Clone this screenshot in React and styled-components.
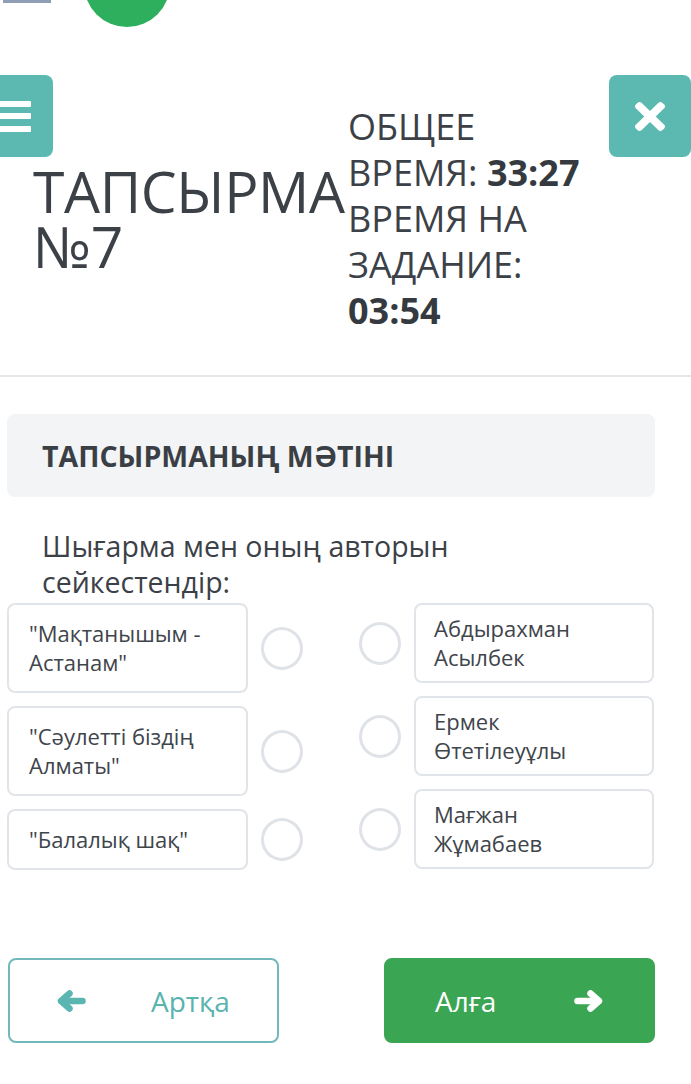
import React from 'react';
import styled, { createGlobalStyle } from 'styled-components';

const GlobalStyle = createGlobalStyle`
  html, body { margin: 0; padding: 0; background: #ffffff; }
  body { font-family: "Open Sans", "Noto Sans", sans-serif; color: #3c4147; }
  * { box-sizing: border-box; }
`;

const Page = styled.div`
  position: relative;
  width: 691px;
  min-height: 1084px;
  overflow: hidden;
  background: #ffffff;
`;

const TopStrip = styled.div`
  height: 27px;
  overflow: hidden;
  display: flex;
  align-items: flex-start;
  padding-left: 3px;
`;

const StripTab = styled.div`
  width: 48px;
  height: 3px;
  background: #8d9eb6;
  flex-shrink: 0;
`;

const Logo = styled.div`
  width: 86px;
  height: 86px;
  margin-top: -59px;
  margin-left: 33px;
  border-radius: 50%;
  background: #2daf5e;
  flex-shrink: 0;
`;

const SideToggle = styled.button`
  position: absolute;
  top: 75px;
  ${(p) => (p.$side === 'left' ? 'left: -29px;' : 'right: 0;')}
  width: 82px;
  height: 82px;
  border: none;
  border-radius: 8px;
  background: #5bb9b2;
  display: flex;
  align-items: center;
  justify-content: center;
  padding: 0;
  cursor: pointer;
`;

const Bars = styled.div`
  display: flex;
  flex-direction: column;
  gap: 6.5px;
  width: 38px;
`;

const Bar = styled.span`
  display: block;
  height: 6px;
  border-radius: 1px;
  background: #ffffff;
`;

const TitleRow = styled.header`
  display: flex;
  align-items: center;
  padding: 77px 0 41px 33px;
  border-bottom: 2px solid #e6e6e6;
`;

const Title = styled.h1`
  flex: 0 0 315px;
  min-width: 0;
  margin: 0;
  font-size: 57px;
  line-height: 55px;
  letter-spacing: -0.4px;
  font-weight: 400;
  color: #3c4147;
  white-space: nowrap;
`;

const Timer = styled.div`
  font-size: 36px;
  line-height: 46px;
  color: #3c4147;
  white-space: nowrap;

  b {
    font-weight: 700;
    color: #353a40;
  }
`;

const Content = styled.main`
  padding: 37px 36px 0 7px;
`;

const SectionHead = styled.div`
  height: 83px;
  display: flex;
  align-items: center;
  padding-left: 35px;
  border-radius: 8px;
  background: #f2f4f6;
  font-size: 28.5px;
  font-weight: 700;
  color: #3a3f45;
`;

const Question = styled.p`
  margin: 31px 0 0 35px;
  max-width: 450px;
  font-size: 28.5px;
  line-height: 36px;
  color: #3c4147;
`;

const Matching = styled.div`
  margin-top: 3px;
  display: grid;
  grid-template-columns: 296px 295px;
  column-gap: 56px;
`;

const Column = styled.div`
  display: flex;
  flex-direction: column;
  gap: 13px;
`;

const Pair = styled.div`
  display: flex;
  align-items: center;
  gap: 13px;
`;

const Card = styled.div`
  width: ${(p) => (p.$side === 'left' ? '241px' : '240px')};
  flex-shrink: 0;
  border: 2px solid #e1e5e9;
  border-radius: 8px;
  background: #ffffff;
  padding: ${(p) => (p.$side === 'left' ? '14px 20px 14px 20px' : '9px 40px 9px 18px')};
  font-size: 22px;
  line-height: 29px;
  color: #40454b;
`;

const Radio = styled.span`
  display: block;
  flex-shrink: 0;
  width: 42px;
  height: 43px;
  border: 3px solid #dfe3e7;
  border-radius: 50%;
  background: #ffffff;
`;

const Nav = styled.nav`
  margin: 88px 0 0 1px;
  display: flex;
  justify-content: space-between;
`;

const NavButton = styled.button`
  width: 271px;
  height: 85px;
  border-radius: 8px;
  display: flex;
  align-items: center;
  font-family: "Open Sans", "Noto Sans", sans-serif;
  font-size: 28px;
  cursor: pointer;
  ${(p) =>
    p.$primary
      ? `
    background: #3aa553;
    border: 2px solid #3aa553;
    color: #ffffff;
    justify-content: space-between;
    padding: 0 50px 0 49px;
  `
      : `
    background: #ffffff;
    border: 2px solid #72b8ba;
    color: #59b3ae;
    justify-content: flex-start;
    gap: 65px;
    padding: 0 0 0 47px;
  `}

  svg {
    flex-shrink: 0;
  }
`;

const Arrow = ({ color, dir }) => (
  <svg
    width="29"
    height="22"
    viewBox="0 0 29 22"
    aria-hidden="true"
    style={dir === 'right' ? { transform: 'scaleX(-1)' } : undefined}
  >
    <g fill="none" stroke={color} strokeWidth="6.5" strokeLinecap="round" strokeLinejoin="round">
      <polyline points="12.5,3.5 4,11 12.5,18.5" />
      <line x1="4.5" y1="11" x2="25.5" y2="11" />
    </g>
  </svg>
);

const CloseIcon = () => (
  <svg width="30" height="29" viewBox="0 80 352 352" preserveAspectRatio="none" aria-hidden="true">
    <path
      fill="#ffffff"
      d="M242.72 256l100.07-100.07c12.28-12.28 12.28-32.19 0-44.48l-22.24-22.240c-12.28-12.28-32.19-12.28-44.48 0L176 189.28 75.93 89.21c-12.28-12.28-32.19-12.28-44.48 0L9.21 111.45c-12.28 12.28-12.28 32.19 0 44.48L109.28 256 9.21 356.07c-12.28 12.28-12.28 32.19 0 44.48l22.24 22.24c12.28 12.28 32.2 12.28 44.48 0L176 322.72l100.07 100.07c12.28 12.28 32.2 12.28 44.48 0l22.24-22.24c12.28-12.28 12.28-32.19 0-44.48L242.72 256z"
    />
  </svg>
);

const works = ['"Мақтанышым - Астанам"', '"Сәулетті біздің Алматы"', '"Балалық шақ"'];
const authors = ['Абдырахман Асылбек', 'Ермек Өтетілеуұлы', 'Мағжан Жұмабаев'];

export default function App() {
  return (
    <>
      <GlobalStyle />
      <Page>
        <TopStrip>
          <StripTab />
          <Logo />
        </TopStrip>

        <SideToggle $side="left" aria-label="menu">
          <Bars>
            <Bar />
            <Bar />
            <Bar />
          </Bars>
        </SideToggle>
        <SideToggle $side="right" aria-label="close">
          <CloseIcon />
        </SideToggle>

        <TitleRow>
          <Title>
            ТАПСЫРМА
            <br />
            №7
          </Title>
          <Timer>
            ОБЩЕЕ
            <br />
            ВРЕМЯ: <b>33:27</b>
            <br />
            ВРЕМЯ НА
            <br />
            ЗАДАНИЕ:
            <br />
            <b>03:54</b>
          </Timer>
        </TitleRow>

        <Content>
          <SectionHead>ТАПСЫРМАНЫҢ МӘТІНІ</SectionHead>
          <Question>Шығарма мен оның авторын сейкестендір:</Question>

          <Matching>
            <Column>
              {works.map((w) => (
                <Pair key={w}>
                  <Card $side="left">{w}</Card>
                  <Radio />
                </Pair>
              ))}
            </Column>
            <Column>
              {authors.map((a) => (
                <Pair key={a}>
                  <Radio />
                  <Card $side="right">{a}</Card>
                </Pair>
              ))}
            </Column>
          </Matching>

          <Nav>
            <NavButton type="button">
              <Arrow color="#5bb6b1" dir="left" />
              Артқа
            </NavButton>
            <NavButton type="button" $primary>
              Алға
              <Arrow color="#ffffff" dir="right" />
            </NavButton>
          </Nav>
        </Content>
      </Page>
    </>
  );
}
